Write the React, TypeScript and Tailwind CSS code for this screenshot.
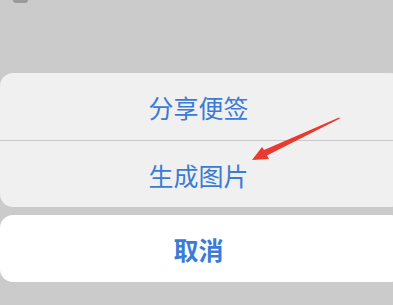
export default function App() {
  return (
    <div className="relative w-[393px] h-[305px] overflow-hidden bg-[#cbcbcb] font-['Noto_Sans_CJK_SC',sans-serif]">
      <div className="ml-[13px] w-[15px] h-[3px] rounded-b-sm bg-[#9a9a9a]" />
      <div className="mt-[70px] -mr-[10px] pr-[6px] rounded-[13px] bg-[#f0f0f0]">
        <button className="flex h-[67px] w-full items-center justify-center pt-[3px] text-[25px] text-[#3b7bd6]">
          分享便签
        </button>
        <div className="h-px bg-[#c9c9c9]" />
        <button className="flex h-[66px] w-full items-center justify-center pt-[3px] text-[25px] text-[#3b7bd6]">
          生成图片
        </button>
      </div>
      <div className="mt-[8px] -mr-[10px] pr-[6px] rounded-[13px] bg-white">
        <button className="flex h-[67px] w-full items-center justify-center pt-[3px] text-[25px] font-bold text-[#3b7bd6]">
          取消
        </button>
      </div>
      <svg
        className="absolute left-0 top-0"
        width="393"
        height="305"
        viewBox="0 0 393 305"
      >
        <path
          d="M339 117.5 L264 150 L262 147 L252 160 L269 159 L267 155.5 L340 118.5 Z"
          fill="#e83a30"
        />
      </svg>
    </div>
  );
}
